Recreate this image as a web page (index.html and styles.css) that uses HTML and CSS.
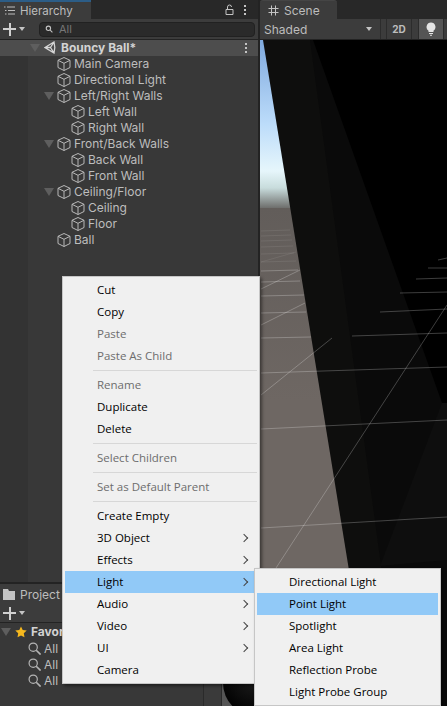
FILE: index.html
```html
<!DOCTYPE html>
<html lang="en">
<head>
    <meta charset="UTF-8">
    <meta name="viewport" content="width=device-width, initial-scale=1.0">
    <title>Bouncy Ball - Unity</title>
    <link rel="stylesheet" href="styles.css">
</head>
<body>
    <svg class="defs" width="0" height="0">
        <symbol id="cube" viewBox="0 0 14 14">
            <path d="M7 0.500 L13 3.300 V10.500 L7 13.500 L1 10.500 V3.300 Z M1 3.300 L7 6.300 L13 3.300 M7 6.300 V13.500" fill="none" stroke="#b8b8b8" stroke-width="1"/>
        </symbol>
        <symbol id="lens" viewBox="0 0 12 12">
            <circle cx="4.8" cy="4.8" r="3.8" fill="none" stroke="#b4b4b4" stroke-width="1.1"/>
            <path d="M7.6 7.6 L11.6 11.6" stroke="#b4b4b4" stroke-width="1.5"/>
        </symbol>
    </svg>

    <div class="editor">
        <div class="left-col">
            <!-- Hierarchy -->
            <section class="panel hierarchy">
                <div class="tabbar">
                    <div class="tab tab-active">
                        <svg class="tab-icon" width="11" height="9" viewBox="0 0 11 9"><path d="M0 1h1.500M3 1h8M1 4.500h1.500M4 4.500h7M1 8h1.500M4 8h7" stroke="#bdbdbd" stroke-width="1"/></svg>
                        Hierarchy
                    </div>
                    <div class="tab-tools">
                        <svg width="9" height="11" viewBox="0 0 9 11"><path d="M1 5.500h7v5h-7z M2.500 5.500V3a2 2 0 0 1 4 0" fill="none" stroke="#c4c4c4" stroke-width="1"/></svg>
                        <span class="dots"><i></i><i></i><i></i></span>
                    </div>
                </div>
                <div class="toolbar">
                    <span class="plus"></span>
                    <span class="caret"></span>
                    <div class="search">
                        <svg width="9" height="8" viewBox="0 0 12 11"><circle cx="4.500" cy="4.500" r="3" fill="none" stroke="#c4c4c4" stroke-width="1.500"/><path d="M7 7l3 3" stroke="#c4c4c4" stroke-width="1.500"/></svg>
                        All
                    </div>
                </div>
                <div class="tree">
                    <div class="scene-row">
                        <span class="arrow"></span>
                        <svg class="unity-logo" width="12" height="13" viewBox="0 0 12 13"><path d="M1 6.500 L10 1 L10.800 6.500 L10 12 Z M1 6.500 H6.500 M10 1 L6.500 6.500 L10 12" fill="none" stroke="#d6d6d6" stroke-width="1.300"/></svg>
                        <span class="scene-name">Bouncy Ball*</span>
                        <span class="dots"><i></i><i></i><i></i></span>
                    </div>
                    <div class="row lvl1"><svg class="cube"><use href="#cube"/></svg>Main Camera</div>
                    <div class="row lvl1"><svg class="cube"><use href="#cube"/></svg>Directional Light</div>
                    <div class="row lvl1 parent"><span class="arrow"></span><svg class="cube"><use href="#cube"/></svg>Left/Right Walls</div>
                    <div class="row lvl2"><svg class="cube"><use href="#cube"/></svg>Left Wall</div>
                    <div class="row lvl2"><svg class="cube"><use href="#cube"/></svg>Right Wall</div>
                    <div class="row lvl1 parent"><span class="arrow"></span><svg class="cube"><use href="#cube"/></svg>Front/Back Walls</div>
                    <div class="row lvl2"><svg class="cube"><use href="#cube"/></svg>Back Wall</div>
                    <div class="row lvl2"><svg class="cube"><use href="#cube"/></svg>Front Wall</div>
                    <div class="row lvl1 parent"><span class="arrow"></span><svg class="cube"><use href="#cube"/></svg>Ceiling/Floor</div>
                    <div class="row lvl2"><svg class="cube"><use href="#cube"/></svg>Ceiling</div>
                    <div class="row lvl2"><svg class="cube"><use href="#cube"/></svg>Floor</div>
                    <div class="row lvl1"><svg class="cube"><use href="#cube"/></svg>Ball</div>
                </div>
            </section>

            <!-- Project -->
            <section class="panel project">
                <div class="tabbar tabbar-project">
                    <div class="tab tab-project">
                        <svg class="tab-icon" width="12" height="11" viewBox="0 0 12 11"><path d="M0 0h5l1 2h6v9H0z" fill="#c4c4c4"/></svg>
                        Project
                    </div>
                </div>
                <div class="toolbar toolbar-project">
                    <span class="plus"></span>
                    <span class="caret"></span>
                </div>
                <div class="project-body">
                    <div class="favorites">
                        <div class="fav-head">
                            <span class="arrow"></span>
                            <svg width="12" height="12" viewBox="0 0 12 12"><path d="M6 0.500 L7.700 4.100 L11.700 4.600 L8.800 7.300 L9.500 11.300 L6 9.400 L2.500 11.300 L3.200 7.300 L0.300 4.600 L4.300 4.100 Z" fill="#f5b81e"/></svg>
                            <b>Favor</b>
                        </div>
                        <div class="fav-row"><svg width="13" height="13"><use href="#lens"/></svg>All</div>
                        <div class="fav-row"><svg width="13" height="13"><use href="#lens"/></svg>All</div>
                        <div class="fav-row"><svg width="13" height="13"><use href="#lens"/></svg>All</div>
                    </div>
                    <div class="grid-col"></div>
                    <div class="preview"><div class="sphere"></div></div>
                </div>
            </section>
        </div>

        <!-- Scene -->
        <section class="scene">
            <div class="tabbar">
                <div class="tab tab-active tab-scene">
                    <svg class="tab-icon" width="11" height="11" viewBox="0 0 11 11"><path d="M3.500 0.500v10M7.500 0.500v10M0.500 3.500h10M0.500 7.500h10" stroke="#c4c4c4" stroke-width="1"/></svg>
                    Scene
                </div>
            </div>
            <div class="scene-tools">
                <div class="shaded">Shaded<span class="caret"></span></div>
                <div class="tool-btn">2D</div>
                <div class="tool-btn tool-on">
                    <svg width="10" height="14" viewBox="0 0 10 14"><path d="M5 0.500a4.500 4.500 0 0 1 2.500 8.200V10h-5V8.700A4.500 4.500 0 0 1 5 0.500z" fill="#e4e4e4"/><path d="M3 11h4v1H3zM4 12.800h2v1H4z" fill="#e4e4e4"/></svg>
                </div>
            </div>
            <svg class="viewport" width="187" height="666" viewBox="260 40 187 666">
                <defs>
                    <linearGradient id="sky" x1="0" y1="40" x2="0" y2="208" gradientUnits="userSpaceOnUse">
                        <stop offset="0" stop-color="#7fa9de"/>
                        <stop offset="0.5" stop-color="#bcdcfa"/>
                        <stop offset="0.78" stop-color="#e6f6fb"/>
                        <stop offset="0.88" stop-color="#c8dcdc"/>
                        <stop offset="1" stop-color="#6e6e6c"/>
                    </linearGradient>
                    <linearGradient id="ground" x1="0" y1="208" x2="0" y2="400" gradientUnits="userSpaceOnUse">
                        <stop offset="0" stop-color="#625d5a"/>
                        <stop offset="1" stop-color="#6e6763"/>
                    </linearGradient>
                </defs>
                <rect x="260" y="40" width="187" height="168" fill="url(#sky)"/>
                <rect x="260" y="208" width="187" height="498" fill="url(#ground)"/>
                <polygon points="263,40 447,40 447,706 371,706" fill="#0e0e0d"/>
                <polygon points="310,40 447,40 447,706 400,706" fill="#0a0a0a"/>
                <polygon points="313,40 447,40 447,403 442,403" fill="#000"/>
                <polygon points="442,403 447,403 447,560 380,566" fill="#0e0e0e"/>
                <g class="grid-lines">
                    <path d="M261 528 L447 517"/>
                    <path d="M261 429 L447 420"/>
                    <path d="M261 373 L447 367"/>
                    <path d="M261 338 L311 337 M352 336 L447 333"/>
                    <path d="M261 313 L306 312 M380 312 L447 309"/>
                    <path d="M261 296 L304 295 M400 293 L447 292"/>
                    <path d="M261 282 L300 281 M416 279 L447 278"/>
                    <path d="M261 271 L298 270 M428 268 L447 268"/>
                    <path d="M438 260 L447 258"/>
                    <path d="M276 568 L447 305"/>
                    <path d="M261 395 L332 338"/>
                    <path d="M261 325 L305 303"/>
                    <path d="M261 289 L300 270"/>
                </g>
                <g class="grid-lines grid-far">
                    <path d="M261 262 L296 252"/>
                    <path d="M261 262 L296 261"/>
                    <path d="M261 254 L294 253"/>
                    <path d="M261 247 L293 246"/>
                    <path d="M261 241 L292 240"/>
                    <path d="M261 236 L291 235"/>
                    <path d="M261 231 L290 230"/>
                </g>
            </svg>
        </section>
    </div>

    <!-- Context menu -->
    <div class="menu main-menu">
        <div class="item">Cut</div>
        <div class="item">Copy</div>
        <div class="item off">Paste</div>
        <div class="item off">Paste As Child</div>
        <div class="sep"></div>
        <div class="item off">Rename</div>
        <div class="item">Duplicate</div>
        <div class="item">Delete</div>
        <div class="sep"></div>
        <div class="item off">Select Children</div>
        <div class="sep"></div>
        <div class="item off">Set as Default Parent</div>
        <div class="sep"></div>
        <div class="item">Create Empty</div>
        <div class="item more">3D Object</div>
        <div class="item more">Effects</div>
        <div class="item more hot">Light</div>
        <div class="item more">Audio</div>
        <div class="item more">Video</div>
        <div class="item more">UI</div>
        <div class="item">Camera</div>
    </div>

    <div class="menu sub-menu">
        <div class="item">Directional Light</div>
        <div class="item hot">Point Light</div>
        <div class="item">Spotlight</div>
        <div class="item">Area Light</div>
        <div class="item">Reflection Probe</div>
        <div class="item">Light Probe Group</div>
    </div>
</body>
</html>
```

FILE: styles.css
```css
* {
    box-sizing: border-box;
}

html, body {
    margin: 0;
    padding: 0;
    height: 100%;
    overflow: hidden;
    background-color: #232323;
}

body {
    position: relative;
    font-family: Inter, "Noto Sans", sans-serif;
    font-size: 12px;
    color: #bdbdbd;
}

.defs {
    position: absolute;
}

.editor {
    display: grid;
    grid-template-columns: 260px 187px;
    height: 706px;
}

.left-col {
    display: flex;
    flex-direction: column;
    border-right: 2px solid #232323;
}

.panel {
    background-color: #383838;
}

.hierarchy {
    height: 582px;
}

.project {
    flex: 1;
    margin-top: 2px;
    min-height: 0;
}

/* tabs */
.tabbar {
    display: flex;
    justify-content: space-between;
    height: 19px;
    background-color: #282828;
}

.tabbar-project {
    height: 20px;
}

.tab {
    display: flex;
    align-items: center;
    gap: 5px;
    padding-left: 4px;
    font-size: 11.500px;
    background-color: #3c3c3c;
}

.tab-active {
    width: 91px;
    border-top: 2px solid #2c5d87;
}

.tab-scene {
    width: 77px;
    padding-left: 8px;
    font-size: 12px;
    border-top: 1px solid #454545;
    border-radius: 3px 3px 0 0;
}

.tab-project {
    width: 62px;
    padding-left: 3px;
    font-size: 12px;
}

.tab-tools {
    display: flex;
    align-items: center;
    gap: 10px;
    padding-right: 12px;
    width: 60px;
    justify-content: flex-end;
}

.dots {
    display: flex;
    flex-direction: column;
    gap: 2px;
}

.dots i {
    display: block;
    width: 2px;
    height: 2px;
    background-color: #c4c4c4;
}

/* toolbars */
.toolbar {
    display: flex;
    align-items: center;
    height: 21px;
    padding-left: 3px;
    background-color: #3c3c3c;
    border-bottom: 1px solid #232323;
}

.toolbar-project {
    height: 19px;
}

.plus {
    width: 13px;
    height: 13px;
    background:
        linear-gradient(#d0d0d0, #d0d0d0) center / 13px 2px no-repeat,
        linear-gradient(#d0d0d0, #d0d0d0) center / 2px 13px no-repeat;
}

.caret {
    display: inline-block;
    width: 0;
    height: 0;
    margin-left: 3px;
    border-left: 3.500px solid transparent;
    border-right: 3.500px solid transparent;
    border-top: 4px solid #c4c4c4;
}

.search {
    display: flex;
    align-items: center;
    gap: 5px;
    width: 216px;
    height: 15px;
    margin-left: 14px;
    padding-left: 5px;
    font-size: 11px;
    color: #777;
    background-color: #2a2a2a;
    border: 1px solid #212121;
    border-radius: 4px;
}

/* tree */
.tree {
    height: 542px;
    background: linear-gradient(90deg, #333 28px, #383838 28px);
}

.scene-row {
    display: flex;
    align-items: center;
    height: 16px;
    padding: 0 0 1px 30px;
    font-weight: 700;
    background-color: #4d4d4d;
}

.scene-row .arrow {
    margin-right: 4px;
}

.unity-logo {
    margin-right: 5px;
}

.scene-name {
    flex: 1;
    color: #d2d2d2;
}

.scene-row .dots {
    margin-right: 11px;
}

.arrow {
    display: inline-block;
    width: 0;
    height: 0;
    border-left: 5px solid transparent;
    border-right: 5px solid transparent;
    border-top: 8px solid #5e5e5e;
}

.row {
    display: flex;
    align-items: center;
    height: 16px;
    padding-bottom: 1px;
    white-space: nowrap;
}

.lvl1 {
    padding-left: 57px;
}

.lvl2 {
    padding-left: 71px;
}

.parent {
    padding-left: 44px;
}

.parent .arrow {
    margin-right: 3px;
}

.cube {
    flex: none;
    width: 14px;
    height: 14px;
    margin-right: 3px;
}

/* project panel */
.project-body {
    display: flex;
    height: 83px;
    overflow: hidden;
}

.favorites {
    width: 204px;
    border-right: 1px solid #2a2a2a;
    white-space: nowrap;
}

.fav-head {
    display: flex;
    align-items: center;
    gap: 4px;
    height: 17px;
    padding-left: 1px;
    color: #d2d2d2;
}

.fav-row {
    display: flex;
    align-items: center;
    gap: 3px;
    height: 16px;
    padding-left: 28px;
}

.grid-col {
    width: 18px;
    background-color: #3a3a3a;
    border-right: 1px solid #2a2a2a;
}

.preview {
    flex: 1;
    overflow: hidden;
    background-color: #555;
}

.sphere {
    width: 66px;
    height: 66px;
    margin: 27px 0 0 1px;
    border-radius: 50%;
    background: radial-gradient(circle at 45% 45%, #1c1c1c, #000 70%);
}

/* scene */
.scene {
    min-width: 0;
}

.scene-tools {
    display: flex;
    height: 21px;
    align-items: stretch;
    background-color: #3c3c3c;
    border-bottom: 1px solid #232323;
}

.shaded {
    display: flex;
    align-items: center;
    justify-content: space-between;
    width: 121px;
    padding: 0 8px 0 4px;
    border-right: 1px solid #2c2c2c;
}

.tool-btn {
    display: flex;
    align-items: center;
    justify-content: center;
    width: 26px;
    margin-left: 5px;
    font-size: 10px;
    font-weight: 700;
    background-color: #3c3c3c;
    border-left: 1px solid #2c2c2c;
    border-right: 1px solid #2c2c2c;
}

.tool-on {
    margin-left: 6px;
    background-color: #555;
}

.viewport {
    display: block;
}

.grid-lines {
    fill: none;
    stroke: rgba(255, 255, 255, 0.24);
    stroke-width: 1;
}

.grid-far {
    stroke: rgba(255, 255, 255, 0.08);
}

/* context menus, laid over the editor */
.menu {
    position: absolute;
    padding: 2px;
    font-family: "Open Sans", "Noto Sans", sans-serif;
    font-size: 11.500px;
    color: #000;
    background-color: #f0f0f0;
    border: 1px solid #c6c6c6;
    box-shadow: 2px 2px 3px rgba(0, 0, 0, 0.45);
}

.main-menu {
    left: 62px;
    top: 276px;
    width: 198px;
    height: 408px;
}

.sub-menu {
    left: 254px;
    top: 568px;
    width: 187px;
    height: 138px;
}

.item {
    position: relative;
    height: 22px;
    line-height: 22px;
    padding-left: 32px;
    white-space: nowrap;
}

.off {
    color: #6d6d6d;
}

.hot {
    background-color: #91c9f7;
}

.more::after {
    content: "";
    position: absolute;
    right: 10px;
    top: 8px;
    width: 5px;
    height: 5px;
    border-top: 1px solid #444;
    border-right: 1px solid #444;
    transform: rotate(45deg);
}

.sep {
    height: 7px;
    padding-top: 3px;
    margin-left: 28px;
}

.sep::before {
    content: "";
    display: block;
    height: 1px;
    background-color: #d7d7d7;
}
```
